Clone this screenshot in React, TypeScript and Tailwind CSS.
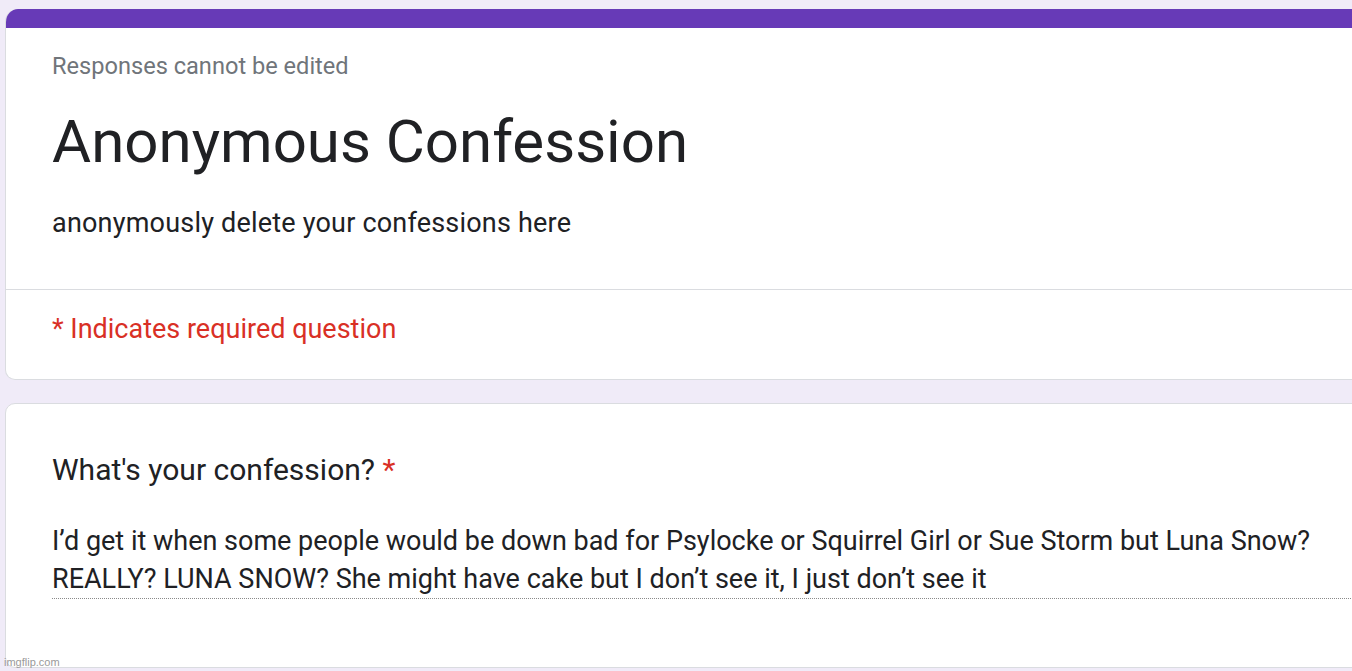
import React from 'react';

const App: React.FC = () => {
  return (
    <div
      className="relative min-h-screen h-[671px] overflow-hidden bg-[#f0ebf8] pt-[9px]"
      style={{ fontFamily: 'Roboto, "Liberation Sans", sans-serif' }}
    >
      {/* header card */}
      <div className="ml-[5px] mr-[-30px] rounded-t-[13px] rounded-b-[10px] bg-white border border-[#dadce0] border-t-0 overflow-hidden">
        <div className="h-[19px] bg-[#673ab7]" />
        <div className="pl-[46px] pt-[24px]">
          <p className="text-[23.6px] leading-[28px] text-[#70757a]">Responses cannot be edited</p>
          <h1 className="mt-[26px] text-[60px] leading-[72px] text-[#202124]">Anonymous Confession</h1>
          <p className="mt-[29px] text-[27px] leading-[32px] tracking-[0.2px] text-[#202124]">
            anonymously delete your confessions here
          </p>
        </div>
        <div className="mt-[50px] h-px bg-[#dadce0]" />
        <p className="pl-[46px] pt-[23px] pb-[34px] text-[27px] leading-[32px] text-[#d93025]">
          * Indicates required question
        </p>
      </div>

      {/* question card */}
      <div className="mt-[23px] ml-[5px] mr-[-30px] h-[265px] rounded-[10px] bg-white border border-[#dadce0]">
        <div className="pl-[46px] pt-[48px]">
          <p className="text-[30px] leading-[36px] text-[#202124]">
            What's your confession? <span className="text-[#d93025]">*</span>
          </p>
          <div className="mt-[34px] border-b border-dotted border-[#8a8a8a]">
            <p className="text-[27px] leading-[38px] text-[#202124]">
              I’d get it when some people would be down bad for Psylocke or Squirrel Girl or Sue Storm but Luna Snow?
              <br />
              REALLY? LUNA SNOW? She might have cake but I don’t see it, I just don’t see it
            </p>
          </div>
        </div>
      </div>

      <span
        className="absolute left-[4px] bottom-[3px] text-[11px] leading-[12px] text-[#9a9a9a]"
        style={{ fontFamily: 'Arial, "Liberation Sans", sans-serif' }}
      >
        imgflip.com
      </span>
    </div>
  );
};

export default App;
